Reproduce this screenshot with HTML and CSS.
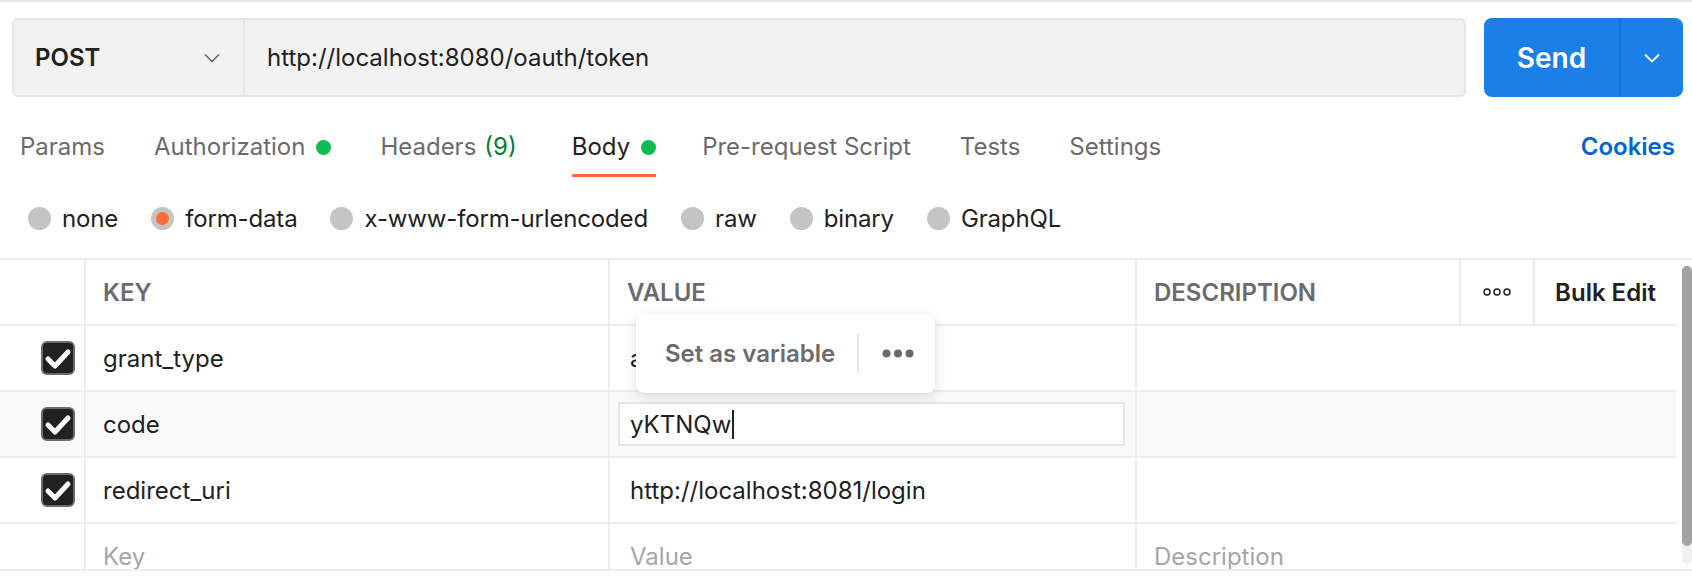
FILE: index.html
```html
<!DOCTYPE html>
<html lang="en">
<head>
<meta charset="utf-8">
<title>Request</title>
<link rel="stylesheet" href="styles.css">
</head>
<body>
<div class="page">
  <div class="topline"></div>

  <div class="request-bar">
    <div class="url-box">
      <div class="method">
        <span>POST</span>
        <svg class="chev" width="16" height="10" viewBox="0 0 16 10"><path d="M1 1.5 L8 8.5 L15 1.5" fill="none" stroke="#6b6b6b" stroke-width="1.6"/></svg>
      </div>
      <div class="url">http://localhost:8080/oauth/token</div>
    </div>
    <div class="send">
      <div class="send-main">Send</div>
      <div class="send-more">
        <svg width="16" height="10" viewBox="0 0 16 10"><path d="M1 1.5 L8 8.5 L15 1.5" fill="none" stroke="#ffffff" stroke-width="1.8"/></svg>
      </div>
    </div>
  </div>

  <div class="tabs">
    <div class="tab">Params</div>
    <div class="tab">Authorization<span class="dot"></span></div>
    <div class="tab">Headers<span class="count">(9)</span></div>
    <div class="tab active">Body<span class="dot"></span></div>
    <div class="tab">Pre-request Script</div>
    <div class="tab">Tests</div>
    <div class="tab">Settings</div>
    <div class="tab cookies">Cookies</div>
  </div>

  <div class="body-types">
    <div class="radio"><span class="circle"></span>none</div>
    <div class="radio"><span class="circle on"></span>form-data</div>
    <div class="radio"><span class="circle"></span>x-www-form-urlencoded</div>
    <div class="radio"><span class="circle"></span>raw</div>
    <div class="radio"><span class="circle"></span>binary</div>
    <div class="radio"><span class="circle"></span>GraphQL</div>
  </div>

  <div class="table-area">
    <div class="grid">
      <div class="row head">
        <div class="cell"></div>
        <div class="cell">KEY</div>
        <div class="cell">VALUE</div>
        <div class="cell">DESCRIPTION</div>
        <div class="cell center">
          <svg width="28" height="8" viewBox="0 0 28 8"><circle cx="4" cy="4" r="3" fill="none" stroke="#212121" stroke-width="1.5"/><circle cx="14" cy="4" r="3" fill="none" stroke="#212121" stroke-width="1.5"/><circle cx="24" cy="4" r="3" fill="none" stroke="#212121" stroke-width="1.5"/></svg>
        </div>
        <div class="cell center bulk">Bulk Edit</div>
      </div>

      <div class="row">
        <div class="cell check"><span class="checkbox"><svg width="30" height="30" viewBox="0 0 30 30"><path d="M5 16 L12 23 L25 9" fill="none" stroke="#fff" stroke-width="5" stroke-linecap="round" stroke-linejoin="round"/></svg></span></div>
        <div class="cell">grant_type</div>
        <div class="cell value">authorization_code</div>
        <div class="cell last"></div>
      </div>

      <div class="row hover">
        <div class="cell check"><span class="checkbox"><svg width="30" height="30" viewBox="0 0 30 30"><path d="M5 16 L12 23 L25 9" fill="none" stroke="#fff" stroke-width="5" stroke-linecap="round" stroke-linejoin="round"/></svg></span></div>
        <div class="cell">code</div>
        <div class="cell editing"><div class="input">yKTNQw<span class="caret"></span></div></div>
        <div class="cell last"></div>
      </div>

      <div class="row">
        <div class="cell check"><span class="checkbox"><svg width="30" height="30" viewBox="0 0 30 30"><path d="M5 16 L12 23 L25 9" fill="none" stroke="#fff" stroke-width="5" stroke-linecap="round" stroke-linejoin="round"/></svg></span></div>
        <div class="cell">redirect_uri</div>
        <div class="cell value">http://localhost:8081/login</div>
        <div class="cell last"></div>
      </div>

      <div class="row">
        <div class="cell"></div>
        <div class="cell placeholder">Key</div>
        <div class="cell value placeholder">Value</div>
        <div class="cell last placeholder">Description</div>
      </div>
    </div>
    <div class="scrollbar"><div class="thumb"></div></div>
  </div>

  <div class="popup">
    <span class="popup-label">Set as variable</span>
    <span class="popup-sep"></span>
    <svg width="32" height="9" viewBox="0 0 32 9"><circle cx="4.5" cy="4.5" r="4" fill="#6b6b6b"/><circle cx="16" cy="4.5" r="4" fill="#6b6b6b"/><circle cx="27.5" cy="4.5" r="4" fill="#6b6b6b"/></svg>
  </div>
</div>
</body>
</html>
```

FILE: styles.css
```css
* { box-sizing: border-box; }

html, body {
  margin: 0;
  padding: 0;
  background: #ffffff;
}

.page {
  position: relative;
  width: 1692px;
  height: 578px;
  overflow: hidden;
  font-family: Inter, "Noto Sans", "Liberation Sans", sans-serif;
  font-size: 24px;
  color: #212121;
  background: #ffffff;
}

.topline {
  height: 2px;
  background: #e6e6e6;
}

/* request bar */
.request-bar {
  display: flex;
  height: 79px;
  margin: 16px 9px 0 12px;
}

.url-box {
  flex: 1;
  display: flex;
  align-items: stretch;
  background: #f2f2f2;
  border: 2px solid #e6e6e6;
  border-radius: 6px;
}

.method {
  width: 231px;
  display: flex;
  align-items: center;
  justify-content: space-between;
  padding: 0 23px 0 21px;
  border-right: 2px solid #e6e6e6;
  font-weight: 600;
}

.url {
  display: flex;
  align-items: center;
  padding-left: 22px;
}

.send {
  display: flex;
  width: 199px;
  margin-left: 18px;
  background: #1b7fe8;
  border-radius: 8px;
  color: #ffffff;
}

.send-main {
  width: 137px;
  display: flex;
  align-items: center;
  justify-content: center;
  font-size: 28px;
  font-weight: 600;
  border-right: 2px solid #1670d4;
}

.send-more {
  flex: 1;
  display: flex;
  align-items: center;
  justify-content: center;
}

/* tabs */
.tabs {
  display: flex;
  align-items: flex-end;
  margin-top: 35px;
  padding: 0 17px 0 20px;
}

.tab {
  display: flex;
  align-items: center;
  line-height: 30px;
  padding-bottom: 12px;
  border-bottom: 3px solid transparent;
  margin-right: 49px;
  color: #6b6b6b;
}

.tab.active {
  color: #212121;
  border-bottom-color: #ff6c37;
  margin-left: 6px;
  margin-right: 46px;
}

.tab.cookies {
  margin-left: auto;
  margin-right: 0;
  color: #0265d2;
  font-weight: 600;
}

.dot {
  width: 15px;
  height: 15px;
  border-radius: 50%;
  background: #0cbb52;
  margin-left: 11px;
}

.count {
  color: #007f31;
  margin-left: 8px;
}

/* body types */
.body-types {
  display: flex;
  align-items: center;
  height: 30px;
  margin-top: 26px;
  padding-left: 28px;
}

.radio {
  display: flex;
  align-items: center;
  margin-right: 33px;
  letter-spacing: -0.15px;
}

.circle {
  width: 23px;
  height: 23px;
  border-radius: 50%;
  background: #c4c4c4;
  margin-right: 11px;
  display: flex;
  align-items: center;
  justify-content: center;
}

.circle.on::after {
  content: "";
  width: 13px;
  height: 13px;
  border-radius: 50%;
  background: #ff6c37;
}

/* table */
.table-area {
  display: flex;
  margin-top: 25px;
  height: 313px;
  border-top: 2px solid #ededed;
  border-bottom: 2px solid #ededed;
  overflow: hidden;
}

.grid {
  width: 1676px;
  flex: none;
}

.row {
  display: grid;
  grid-template-columns: 86px 524px 527px 539px;
  height: 66px;
  border-bottom: 2px solid #ededed;
}

.row.head {
  grid-template-columns: 86px 524px 527px 324px 74px 141px;
  color: #6b6b6b;
  font-weight: 600;
}

.row.hover {
  background: #f9f9f9;
}

.cell {
  display: flex;
  align-items: center;
  padding-left: 17px;
  border-right: 2px solid #ededed;
  white-space: nowrap;
  overflow: hidden;
}

.cell.last,
.cell.bulk {
  border-right: none;
}

.cell.center {
  justify-content: center;
  padding-left: 0;
}

.cell.bulk {
  color: #212121;
}

.cell.value {
  padding-left: 20px;
}

.cell.placeholder {
  color: #a6a6a6;
}

.cell.check {
  justify-content: flex-end;
  padding: 0 9px 0 0;
}

.checkbox {
  width: 34px;
  height: 34px;
  border: 2px solid #6b6b6b;
  border-radius: 6px;
  background: #212121;
  display: flex;
}

.cell.editing {
  padding: 0 10px 0 8px;
}

.input {
  flex: 1;
  height: 44px;
  display: flex;
  align-items: center;
  padding-left: 10px;
  background: #ffffff;
  border: 2px solid #e6e6e6;
}

.caret {
  width: 2px;
  height: 29px;
  background: #212121;
  margin-left: 1px;
}

.scrollbar {
  width: 10px;
  height: 298px;
  margin: 6px 0 0 6px;
  background: #f0f0f0;
  border-radius: 5px;
}

.thumb {
  height: 280px;
  background: #a3a3a3;
  border-radius: 5px;
}

/* floating popup */
.popup {
  position: absolute;
  left: 636px;
  top: 314px;
  width: 299px;
  height: 79px;
  display: flex;
  align-items: center;
  padding-left: 29px;
  background: #ffffff;
  border-radius: 8px;
  box-shadow: 0 4px 14px rgba(0, 0, 0, 0.12), 0 0 2px rgba(0, 0, 0, 0.08);
}

.popup-label {
  color: #6b6b6b;
  font-weight: 600;
}

.popup-sep {
  width: 2px;
  height: 39px;
  background: #e6e6e6;
  margin: 0 23px 0 22px;
}
```
